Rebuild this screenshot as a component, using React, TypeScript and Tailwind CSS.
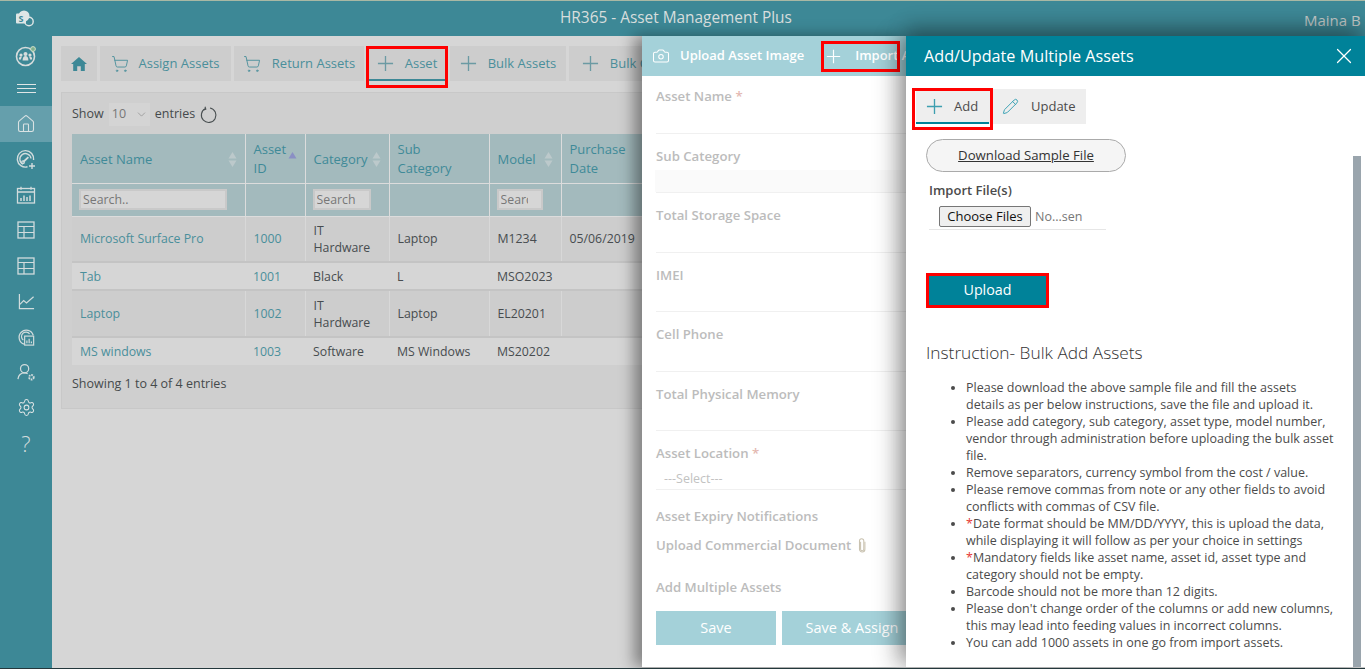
import { Camera, ChevronDown, House, Pencil, Settings, ShoppingCart, X } from "lucide-react";

const font = { fontFamily: '"Open Sans", "Noto Sans", sans-serif' };

function Plus({ className }: { className?: string }) {
  return (
    <svg viewBox="0 0 18 18" className={className} fill="none" stroke="currentColor" strokeWidth="1.4">
      <path d="M9 1v16M1 9h16" />
    </svg>
  );
}

function HomeSolid() {
  return (
    <svg viewBox="0 0 16 14" className="h-[14px] w-[16px]" fill="#3d8896">
      <path d="M8 0 0 7h2.2v7h4V9.3h3.6V14h4V7H16z" />
    </svg>
  );
}

function SharepointLogo() {
  return (
    <svg viewBox="0 0 20 18" className="h-[18px] w-[20px]">
      <circle cx="9" cy="6" r="5.5" fill="#dfe6e6" />
      <circle cx="14" cy="11.5" r="4.2" fill="none" stroke="#dfe6e6" strokeWidth="1.4" />
      <rect x="1" y="3.5" width="10" height="10" rx="1" fill="#dfe6e6" />
      <text x="6" y="12" textAnchor="middle" fontSize="9" fontWeight="700" fill="#3d8896" fontFamily="Open Sans">S</text>
    </svg>
  );
}

function UsersRing() {
  return (
    <svg viewBox="0 0 22 22" className="h-[22px] w-[22px]">
      <circle cx="10.5" cy="11.5" r="9" fill="none" stroke="#d6dcdc" strokeWidth="1.6" />
      <g fill="#d6dcdc">
        <circle cx="10.5" cy="9" r="2" />
        <circle cx="6" cy="10" r="1.6" />
        <circle cx="15" cy="10" r="1.6" />
        <path d="M7.6 15.5c0-3 1.2-4.4 2.9-4.4s2.9 1.4 2.9 4.4z" />
        <path d="M3.8 14.5c0-2 .8-3 2.2-3 .4 0 .7.1 1 .2-.6.8-.9 1.7-1 2.8z" />
        <path d="M17.2 14.5c0-2-.8-3-2.2-3-.4 0-.7.1-1 .2.6.8.9 1.7 1 2.8z" />
      </g>
      <circle cx="18" cy="4" r="2.4" fill="#7fb08f" stroke="#cfe0c8" strokeWidth="1" />
    </svg>
  );
}

const stroke = { fill: "none", stroke: "#d2dcdd", strokeWidth: 1.3 };

function GaugePlus() {
  return (
    <svg viewBox="0 0 22 22" className="h-[22px] w-[22px]" {...stroke}>
      <path d="M12.5 18.8A8.2 8.2 0 1 1 18.6 12" strokeWidth="1.4" />
      <path d="M8 16.2A5.6 5.6 0 1 1 16 10.5" />
      <path d="M8.2 14 13.4 9.2" strokeWidth="1.8" />
      <circle cx="8" cy="14.2" r="1.3" />
      <path d="M17 15v6M14 18h6" strokeWidth="1.4" />
    </svg>
  );
}

function CalendarBars() {
  return (
    <svg viewBox="0 0 20 18" className="h-[18px] w-[20px]" {...stroke}>
      <rect x="1.5" y="2.5" width="17" height="14.5" strokeWidth="1.3" />
      <path d="M1.5 6h17M5 .8v3M15 .8v3" />
      <path d="M5 15v-3M8 15V9.5M11 15v-4M14 15V9.5" strokeWidth="1.5" />
    </svg>
  );
}

function TableGrid() {
  return (
    <svg viewBox="0 0 18 18" className="h-[18px] w-[18px]" {...stroke}>
      <rect x="1" y="1" width="16" height="16" strokeWidth="1.3" />
      <path d="M1 5.5h16M1 11.5h16M7 5.5V17" strokeWidth="1.2" />
    </svg>
  );
}

function TrendChart() {
  return (
    <svg viewBox="0 0 18 18" className="h-[17px] w-[17px]" {...stroke}>
      <path d="M1.5 1v15.5H17" />
      <path d="M2 12l4-4 3 2.5 7.5-6.5" />
    </svg>
  );
}

function ReportRing() {
  return (
    <svg viewBox="0 0 20 20" className="h-[18px] w-[18px]" {...stroke}>
      <path d="M8 18A8 8 0 1 1 18 8" strokeWidth="1.4" />
      <path d="M7 13.5A5 5 0 1 1 14 6.5" />
      <rect x="8.5" y="9" width="10" height="10" />
      <path d="M11 17v-3M13.5 17v-5M16 17v-2" />
    </svg>
  );
}

function UserGear() {
  return (
    <svg viewBox="0 0 20 20" className="h-[19px] w-[19px]" {...stroke}>
      <circle cx="8" cy="6" r="4.3" />
      <path d="M1 17c.5-4 3-6.5 7-6.5 1.2 0 2.3.2 3.2.7" />
      <circle cx="15.2" cy="15" r="2.4" strokeWidth="2" strokeDasharray="1.6 .9" />
    </svg>
  );
}

function Refresh() {
  return (
    <svg viewBox="0 0 18 18" className="h-[18px] w-[18px]" fill="none" stroke="#4a5052" strokeWidth="1.1">
      <path d="M5.5 2.6A7.3 7.3 0 1 0 10 2" />
      <path d="M5 .8l.8 2.3-2.3.8" />
    </svg>
  );
}

function ClipUpright() {
  return (
    <svg viewBox="0 0 8 16" className="h-[15px] w-[8px]" fill="none" stroke="#c9c2b0" strokeWidth="1.1">
      <path d="M2.5 4v8a1.7 1.7 0 0 0 3.4 0V3.2a2.3 2.3 0 0 0-4.6 0" />
      <path d="M1.3 3.2V12a2.9 2.9 0 0 0 5.8 0V4" />
    </svg>
  );
}

function SortArrows({ active }: { active?: boolean }) {
  return (
    <svg viewBox="0 0 9 17" className="h-[17px] w-[9px] shrink-0">
      <path d="M4.5 1 8.5 7.5h-8z" fill={active ? "#8a8fc4" : "#bcc9cb"} />
      {!active && <path d="M4.5 16 8.5 9.5h-8z" fill="#bcc9cb" />}
    </svg>
  );
}

const nav = [
  { icon: <House size={20} strokeWidth={1.3} color="#d9e2e3" />, active: true },
  { icon: <GaugePlus /> },
  { icon: <CalendarBars /> },
  { icon: <TableGrid /> },
  { icon: <TableGrid /> },
  { icon: <TrendChart /> },
  { icon: <ReportRing /> },
  { icon: <UserGear /> },
  { icon: <Settings size={19} strokeWidth={1.3} color="#dbe3e4" /> },
  { icon: <span className="text-[22px] leading-none font-light text-[#d2dcdd]">?</span> },
];

const tabs = [
  { label: "Assign Assets", icon: "cart", w: "w-[131px]", gap: "gap-[9px]" },
  { label: "Return Assets", icon: "cart", w: "w-[130px]", gap: "gap-[11px]" },
  { label: "Asset", icon: "plus", w: "w-[80px]", gap: "gap-[11px]", active: true },
  { label: "Bulk Assets", icon: "plus", w: "w-[116px]", gap: "gap-[11px]" },
  { label: "Bulk Check", icon: "plus", w: "w-[120px]", gap: "gap-[11px]" },
];

const rows = [
  { name: "Microsoft Surface Pro", id: "1000", cat: "IT Hardware", sub: "Laptop", model: "M1234", date: "05/06/2019", h: "h-[46px]" },
  { name: "Tab", id: "1001", cat: "Black", sub: "L", model: "MSO2023", date: "", h: "h-[28px]" },
  { name: "Laptop", id: "1002", cat: "IT Hardware", sub: "Laptop", model: "EL20201", date: "", h: "h-[47px]" },
  { name: "MS windows", id: "1003", cat: "Software", sub: "MS Windows", model: "MS20202", date: "", h: "h-[28px]" },
];

const fields = ["Asset Name", "Sub Category", "Total Storage Space", "IMEI", "Cell Phone", "Total Physical Memory"];

function AssetTable() {
  return (
    <table className="w-[640px] table-fixed border-collapse text-[12.3px]">
      <colgroup>
        <col className="w-[173px]" />
        <col className="w-[60px]" />
        <col className="w-[84px]" />
        <col className="w-[100px]" />
        <col className="w-[72px]" />
        <col className="w-[151px]" />
      </colgroup>
      <thead className="bg-[#a3babd] text-[13px] leading-[19px] text-[#3f8a98]">
        <tr className="h-[49px]">
          <th className="border-r border-b border-[#dcdcdc] px-2 pt-[2px] text-left font-normal">
            <div className="flex items-center justify-between">Asset Name <SortArrows /></div>
          </th>
          <th className="border-r border-b border-[#dcdcdc] px-2 pt-[2px] text-left font-normal">
            <div className="flex items-center justify-between">
              <span>Asset<br />ID</span>
              <SortArrows active />
            </div>
          </th>
          <th className="border-r border-b border-[#dcdcdc] px-2 pt-[2px] text-left font-normal">
            <div className="flex items-center justify-between">Category <SortArrows /></div>
          </th>
          <th className="border-r border-b border-[#dcdcdc] px-2 pt-[2px] text-left font-normal">Sub<br />Category</th>
          <th className="border-r border-b border-[#dcdcdc] px-2 pt-[2px] text-left font-normal">
            <div className="flex items-center justify-between">Model <SortArrows /></div>
          </th>
          <th className="border-b border-[#dcdcdc] px-2 pt-[2px] text-left font-normal">Purchase<br />Date</th>
        </tr>
        <tr className="h-[33px]">
          <td className="border-r border-b border-[#dcdcdc] px-[7px]">
            <input readOnly placeholder="Search.." className="h-[21px] w-[148px] border-2 border-[#c9c9c9] bg-[#d6d6d6] px-[2px] text-[12.3px] placeholder:text-[#777]" />
          </td>
          <td className="border-r border-b border-[#dcdcdc]" />
          <td className="border-r border-b border-[#dcdcdc] px-[7px]">
            <input readOnly placeholder="Search" className="h-[21px] w-[58px] border-2 border-[#c9c9c9] bg-[#d6d6d6] px-[2px] text-[12.3px] placeholder:text-[#777]" />
          </td>
          <td className="border-r border-b border-[#dcdcdc]" />
          <td className="border-r border-b border-[#dcdcdc] px-[7px]">
            <input readOnly placeholder="Search" className="h-[21px] w-[46px] border-2 border-[#c9c9c9] bg-[#d6d6d6] pr-[13px] pl-[2px] text-[12.3px] placeholder:text-[#777]" />
          </td>
          <td className="border-b border-[#dcdcdc]" />
        </tr>
      </thead>
      <tbody className="leading-[17px]">
        {rows.map((r, i) => (
          <tr key={r.id} className={`${r.h} ${i % 2 === 0 ? "bg-[#cdcdcd]" : "bg-[#d6d6d6]"} ${i < 3 ? "border-b-2 border-[#c4c4c4]" : ""}`}>
            <td className={`px-2 text-[#4a8f9b] ${i % 2 === 0 ? "border-r border-[#d8d8d8]" : ""}`}>{r.name}</td>
            <td className={`px-2 text-[#4a8f9b] ${i % 2 === 0 ? "border-r border-[#d8d8d8]" : ""}`}>{r.id}</td>
            <td className={`px-2 text-[#474c4f] ${i % 2 === 0 ? "border-r border-[#d8d8d8]" : ""}`}>{r.cat}</td>
            <td className={`px-2 text-[#474c4f] ${i % 2 === 0 ? "border-r border-[#d8d8d8]" : ""}`}>{r.sub}</td>
            <td className={`px-2 text-[#474c4f] ${i % 2 === 0 ? "border-r border-[#d8d8d8]" : ""}`}>{r.model}</td>
            <td className="px-2 text-[#474c4f]">{r.date}</td>
          </tr>
        ))}
      </tbody>
    </table>
  );
}

function AssetPanel() {
  return (
    <div className="absolute top-[36px] bottom-px left-[642px] w-[264px] overflow-hidden bg-white shadow-[-8px_0_14px_rgba(0,0,0,0.4)]">
      <div className="flex h-[40px] items-center whitespace-nowrap bg-[#a4d1d9] pl-[10px] text-[13px] font-semibold text-white">
        <Camera size={18} strokeWidth={1.4} className="shrink-0" />
        <span className="ml-[10px] shrink-0">Upload Asset Image</span>
        <span className="ml-[22px] flex shrink-0 items-center gap-[14px]">
          <Plus className="h-[15px] w-[15px]" />
          Import Assets
        </span>
        <span className="absolute top-[5px] left-[179px] h-[31px] w-[79px] border-[3px] border-[#ff0000]" />
      </div>
      <div className="-mt-[2px] pl-[14px] text-[13.2px] font-semibold text-[#bcbcbc]">
        {fields.map((f, i) => (
          <div key={f} className="relative h-[59.5px] border-b border-[#f0f0f0] pt-[13px] leading-[18px]">
            {f}
            {i === 0 && <span className="text-[#e3b7b0]"> *</span>}
            {i === 1 && <div className="absolute right-0 bottom-0 -left-px h-[22px] bg-[#fafafa]" />}
          </div>
        ))}
        <div className="h-[59px] border-b border-[#f0f0f0] pt-[13px] leading-[18px]">
          Asset Location <span className="text-[#e3b7b0]">*</span>
          <div className="mt-[8px] pl-[8px] text-[12.5px] font-normal text-[#c2c2c2]">---Select---</div>
        </div>
        <div className="mt-[17px] leading-[18px]">Asset Expiry Notifications</div>
        <div className="mt-[11px] flex items-center gap-[7px] leading-[18px]">
          Upload Commercial Document
          <ClipUpright />
        </div>
        <div className="mt-[24px] leading-[18px]">Add Multiple Assets</div>
        <div className="mt-[15px] flex gap-[6px] whitespace-nowrap text-[14.5px] font-normal text-white">
          <div className="flex h-[34px] w-[120px] shrink-0 items-center justify-center bg-[#a4d1d9]">Save</div>
          <div className="flex h-[34px] w-[140px] shrink-0 items-center justify-center bg-[#a4d1d9]">Save &amp; Assign</div>
        </div>
      </div>
    </div>
  );
}

function BulkPanel() {
  return (
    <div className="absolute top-[36px] right-0 bottom-px left-[906px] bg-white text-[#4b4b4b] shadow-[-10px_0_22px_rgba(0,0,0,0.3),0_-10px_18px_rgba(0,0,0,0.25)]">
      <div className="flex h-[40px] items-center justify-between bg-[#008299] pr-[8px] pl-[18px] text-white">
        <span className="pt-px text-[16.2px] font-medium">Add/Update Multiple Assets</span>
        <X size={26} strokeWidth={1.1} />
      </div>

      <div className="absolute top-[120px] right-[4px] bottom-0 w-[8px] bg-[#9aa5ad]" />

      <div className="pt-[13px] pl-[10px]">
        <div className="flex h-[35px] w-[170px] bg-[#eeeeee] text-[13px]">
          <div className="relative flex w-[73px] items-center gap-[11px] pl-[10px]">
            <Plus className="h-[17px] w-[17px] text-[#3d9fb0]" />
            Add
            <span className="absolute right-0 bottom-0 left-0 h-[2px] bg-[#008299]" />
            <span className="absolute -top-px -right-[4px] -bottom-[6px] -left-[4px] border-[3px] border-[#ff0000]" />
          </div>
          <div className="flex items-center gap-[12px] pl-[13px]">
            <Pencil size={17} strokeWidth={1.3} className="text-[#2f9db1]" />
            Update
          </div>
        </div>
      </div>

      <div className="pl-[20px]">
        <div className="mt-[15px] flex h-[33px] w-[200px] items-center justify-center rounded-full border border-[#aaaaaa] bg-[#f5f5f5] text-[13.2px] text-[#333] underline">
          Download Sample File
        </div>
        <div className="mt-[9px] ml-[3px] text-[13px] font-semibold leading-[18px]">Import File(s)</div>
        <div className="mt-[7px] ml-[3px] flex h-[24px] w-[177px] items-start border-b border-[#e6e6e6] pl-[10px]">
          <div className="flex h-[21px] w-[92px] items-center justify-center rounded-[2px] border border-[#767676] bg-[#efefef] text-[13px] text-[#111]">Choose Files</div>
          <span className="ml-[4px] text-[12.5px] leading-[21px] text-[#777]">No...sen</span>
        </div>
        <div className="mt-[43px] flex h-[35px] w-[123px] items-center justify-center border-[3px] border-[#ff0000] bg-[#008299] pb-px text-[14.3px] text-white">Upload</div>
        <h2 className="mt-[33px] text-[17.3px] font-light leading-[23px] text-[#333]">Instruction- Bulk Add Assets</h2>
        <ul className="mt-[15px] list-disc pl-[40px] text-[12.5px] leading-[17px] whitespace-nowrap text-[#4b4b4b]">
          <li>Please download the above sample file and fill the assets<br />details as per below instructions, save the file and upload it.</li>
          <li>Please add category, sub category, asset type, model number,<br />vendor through administration before uploading the bulk asset<br />file.</li>
          <li>Remove separators, currency symbol from the cost / value.</li>
          <li>Please remove commas from note or any other fields to avoid<br />conflicts with commas of CSV file.</li>
          <li><span className="text-[#e53935]">*</span>Date format should be MM/DD/YYYY, this is upload the data,<br />while displaying it will follow as per your choice in settings</li>
          <li><span className="text-[#e53935]">*</span>Mandatory fields like asset name, asset id, asset type and<br />category should not be empty.</li>
          <li>Barcode should not be more than 12 digits.</li>
          <li>Please don't change order of the columns or add new columns,<br />this may lead into feeding values in incorrect columns.</li>
          <li>You can add 1000 assets in one go from import assets.</li>
        </ul>
      </div>
    </div>
  );
}

export default function App() {
  return (
    <div style={font} className="relative h-[669px] w-[1365px] overflow-hidden border-b border-[#24383c] bg-[#d6d6d6]">
      <header className="relative flex h-[36px] items-center border-t border-[#a9b8a4] bg-[#3d8896]">
        <div className="flex w-[52px] justify-center pr-[2px]"><SharepointLogo /></div>
        <div className="-mt-[2px] ml-[508px] text-[15.4px] whitespace-nowrap text-[#d8dedd]">HR365 - Asset Management Plus</div>
        <div className="absolute top-[8px] left-[1304px] text-[15px] whitespace-nowrap text-[#c6cccb]">Maina B</div>
      </header>

      <div className="flex h-[632px]">
        <aside className="w-[52px] shrink-0 bg-[#3d8896]">
          <div className="flex h-[34px] items-center justify-center pt-[6px]"><UsersRing /></div>
          <div className="flex h-[36px] items-center justify-center">
            <div className="w-[19px] space-y-[3px]">
              <div className="h-px bg-[#e0e6e6]" />
              <div className="h-px bg-[#e0e6e6]" />
              <div className="h-px bg-[#e0e6e6]" />
            </div>
          </div>
          {nav.map((n, i) => (
            <div key={i} className={`flex h-[35.5px] items-center justify-center ${n.active ? "bg-[#659fac]" : ""}`}>
              {n.icon}
            </div>
          ))}
        </aside>

        <main className="min-w-0 flex-1 overflow-hidden pt-[10px] pl-[9px]">
          <nav className="flex h-[35px] gap-[3px] text-[13px] text-[#4a8f9b]">
            <div className="flex w-[36px] items-center justify-center bg-[#cdcdcd]"><HomeSolid /></div>
            {tabs.map((t) => (
              <div key={t.label} className={`relative flex shrink-0 items-center justify-center whitespace-nowrap bg-[#cdcdcd] ${t.w} ${t.gap}`}>
                {t.icon === "cart" ? <ShoppingCart size={18} strokeWidth={1.2} /> : <Plus className="h-[17px] w-[17px] text-[#6b9aa3]" />}
                {t.label}
                {t.active && <span className="absolute right-0 bottom-0 left-0 h-[2px] bg-[#3d8896]" />}
                {t.active && <span className="absolute top-0 -right-px -bottom-[7px] -left-px border-[3px] border-[#ff0000]" />}
              </div>
            ))}
          </nav>

          <section className="mt-[11px] h-[317px] w-[720px] border border-[#c8c8c8] bg-[#cfcfcf] pt-[10px] pl-[10px] text-[12.5px] text-[#454a4c]">
            <div className="flex h-[23px] items-center">
              <span>Show</span>
              <div className="ml-[5px] flex h-[23px] w-[41px] items-center justify-between bg-[#d4d4d4] pr-[2px] pl-[3px] text-[#777]">
                10
                <ChevronDown size={13} strokeWidth={1} />
              </div>
              <span className="ml-[5px]">entries</span>
              <span className="ml-[5px]"><Refresh /></span>
            </div>
            <div className="mt-[8px]"><AssetTable /></div>
            <div className="mt-[10px] leading-[18px]">Showing 1 to 4 of 4 entries</div>
          </section>
        </main>
      </div>

      <AssetPanel />
      <BulkPanel />
    </div>
  );
}
